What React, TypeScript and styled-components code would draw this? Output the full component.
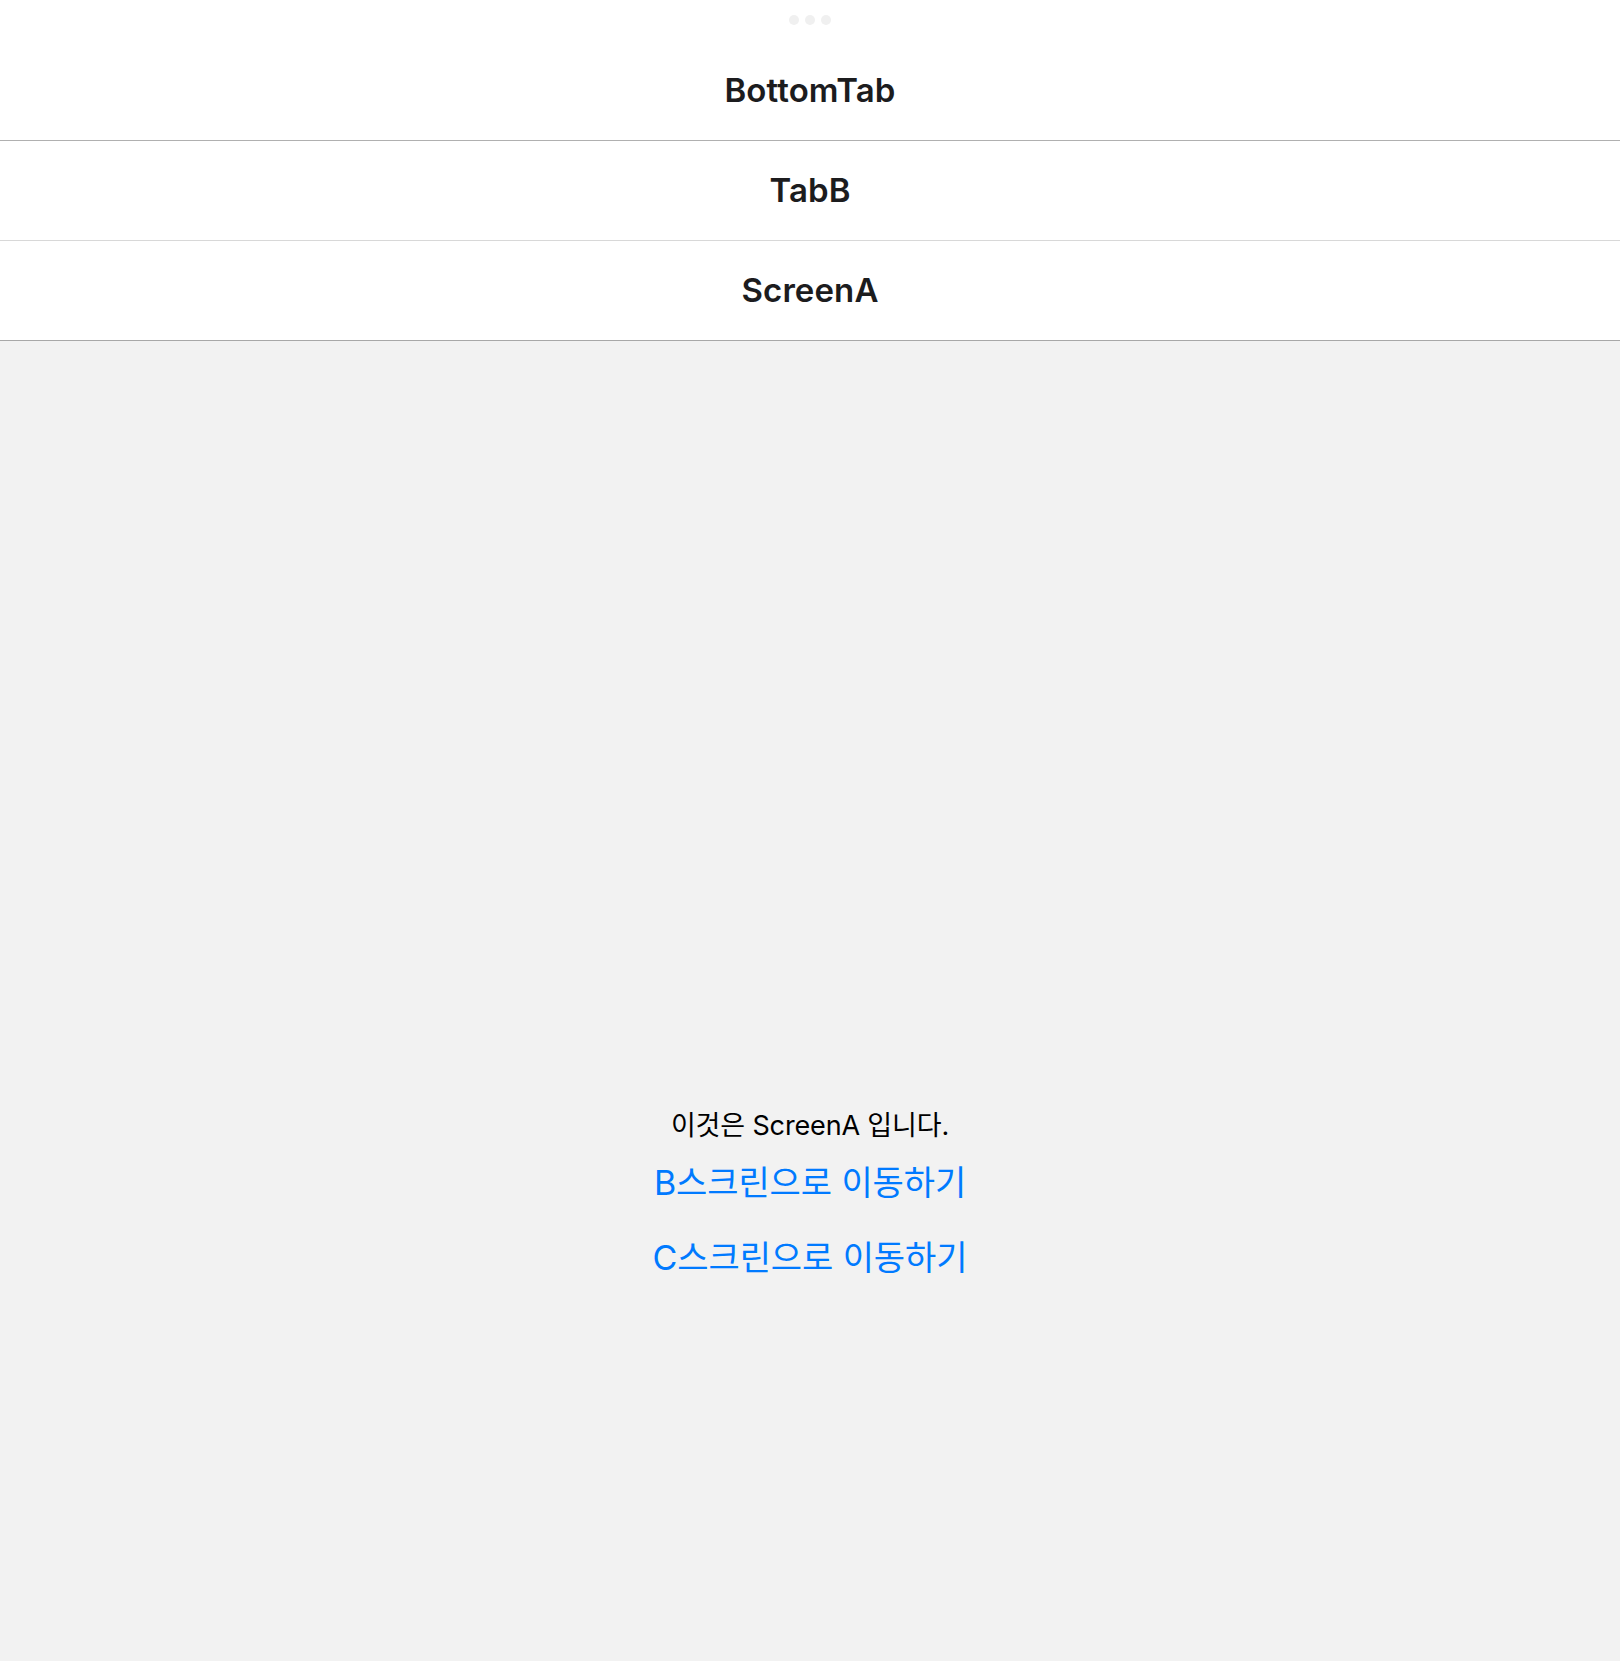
import React from "react";
import styled, { createGlobalStyle } from "styled-components";

const GlobalStyle = createGlobalStyle`
  html, body {
    margin: 0;
    padding: 0;
    background: #f2f2f2;
  }
  body {
    font-family: "Inter", "Noto Sans CJK KR", sans-serif;
    -webkit-font-smoothing: antialiased;
  }
  * { box-sizing: border-box; }
`;

const Page = styled.div`
  width: 1620px;
  min-height: 1661px;
  display: flex;
  flex-direction: column;
  background: #f2f2f2;
`;

const StatusArea = styled.div`
  height: 41px;
  padding-bottom: 1px;
  background: #ffffff;
  display: flex;
  justify-content: center;
  align-items: center;
  gap: 6px;
`;

const Dot = styled.span`
  width: 10px;
  height: 10px;
  border-radius: 50%;
  background: #f0f0f0;
`;

const Bar = styled.header<{ $line: string }>`
  height: 100px;
  padding-bottom: 1px;
  background: #ffffff;
  border-bottom: 1px solid ${(p) => p.$line};
  display: flex;
  align-items: center;
  justify-content: center;
`;

const Title = styled.h1`
  margin: 0;
  font-family: "Inter", "Noto Sans CJK KR", sans-serif;
  font-size: 33px;
  font-weight: 600;
  color: #1c1c1e;
  letter-spacing: 0.1px;
`;

const Body = styled.main`
  flex: 1;
  display: flex;
  flex-direction: column;
  align-items: center;
  padding-top: 765px;
`;

const Message = styled.p`
  margin: 0;
  font-size: 27px;
  line-height: 40px;
  letter-spacing: -0.15px;
  color: #000000;
`;

const LinkButton = styled.button`
  border: none;
  background: transparent;
  padding: 14px 16px 15px;
  margin: 0;
  font-family: "Inter", "Noto Sans CJK KR", sans-serif;
  font-size: 34px;
  line-height: 46px;
  letter-spacing: -0.1px;
  color: #007aff;
  cursor: pointer;
`;

export default function App() {
  return (
    <>
      <GlobalStyle />
      <Page>
        <StatusArea>
          <Dot />
          <Dot />
          <Dot />
        </StatusArea>
        <Bar $line="#b0b0b0">
          <Title>BottomTab</Title>
        </Bar>
        <Bar $line="#d8d8d8">
          <Title>TabB</Title>
        </Bar>
        <Bar $line="#a8a8a8">
          <Title>ScreenA</Title>
        </Bar>
        <Body>
          <Message>이것은 ScreenA 입니다.</Message>
          <LinkButton>B스크린으로 이동하기</LinkButton>
          <LinkButton>C스크린으로 이동하기</LinkButton>
        </Body>
      </Page>
    </>
  );
}
